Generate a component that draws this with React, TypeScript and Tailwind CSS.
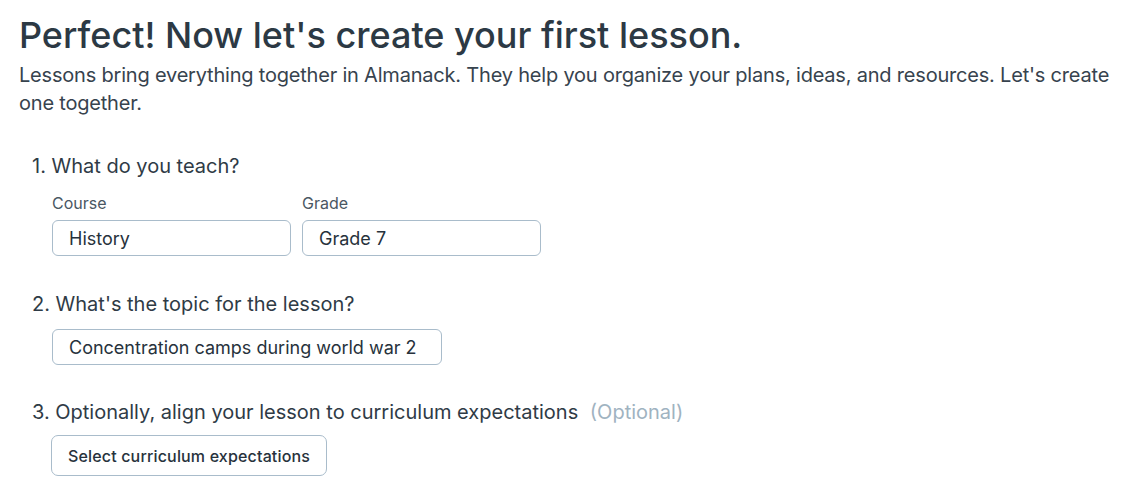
const Field = ({ label, value }: { label: string; value: string }) => (
  <div className="flex flex-col">
    <label className="text-[16px] text-[#4a5763] leading-5 mb-[7px]">{label}</label>
    <div className="w-[239px] h-[36px] flex items-center px-4 border border-[#a9bccb] rounded-[6px] text-[18px] text-[#27323c]">
      {value}
    </div>
  </div>
);

export default function App() {
  return (
    <div
      className="px-[19px] pt-[13px] text-[#2f3b46]"
      style={{ fontFamily: "Inter, 'Noto Sans', sans-serif" }}
    >
      <h1 className="text-[36px] leading-[44px] font-medium text-[#2c3944]">
        Perfect! Now let's create your first lesson.
      </h1>
      <p className="text-[20px] leading-[28px] tracking-[-0.01em] text-[#37434e] mt-[4px]">
        Lessons bring everything together in Almanack. They help you organize your plans, ideas, and resources. Let's create one together.
      </p>

      <div className="pl-[13px] mt-[35px]">
        <h2 className="text-[20px] leading-7 text-[#2f3b46]">1. What do you teach?</h2>
        <div className="flex gap-[11px] pl-5 mt-[13px]">
          <Field label="Course" value="History" />
          <Field label="Grade" value="Grade 7" />
        </div>

        <h2 className="text-[20px] leading-7 text-[#2f3b46] mt-[34px]">
          2. What's the topic for the lesson?
        </h2>
        <div className="pl-5 mt-[11px]">
          <div className="w-[390px] h-[36px] flex items-center px-4 border border-[#a9bccb] rounded-[6px] text-[18px] text-[#27323c]">
            Concentration camps during world war 2
          </div>
        </div>

        <h2 className="text-[20px] leading-7 text-[#2f3b46] mt-[33px]">
          3. Optionally, align your lesson to curriculum expectations{" "}
          <span className="text-[#9fb3c1] ml-[6px]">(Optional)</span>
        </h2>
        <div className="pl-[19px] mt-[9px]">
          <button className="h-[41px] px-4 border border-[#a9bccb] rounded-[7px] text-[16px] font-medium tracking-[0.01em] text-[#27323c]">
            Select curriculum expectations
          </button>
        </div>
      </div>
    </div>
  );
}
